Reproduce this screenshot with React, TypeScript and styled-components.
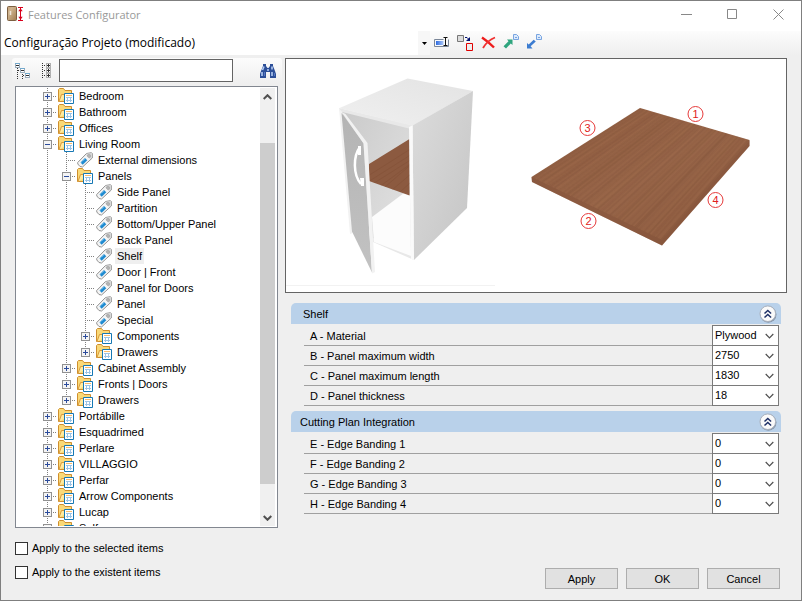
import React, { useState } from "react";
import styled, { createGlobalStyle } from "styled-components";

const GlobalStyle = createGlobalStyle`
  *, *::before, *::after { box-sizing: border-box; }
  body { margin: 0; background: #efefef; }
  button, input, select { font: inherit; color: inherit; }
`;

const UI_FONT = `"Liberation Sans", Arial, sans-serif`;
const TITLE_FONT = `"Open Sans", "Noto Sans", sans-serif`;

const Window = styled.div`
  display: flex;
  flex-direction: column;
  height: 100vh;
  border: 1px solid #7f7f7f;
  background: #efefef;
  color: #000;
  font: 11px/16px ${UI_FONT};
`;

const TitleBar = styled.header`
  display: flex;
  align-items: flex-start;
  height: 30px;
  padding-left: 6px;
  background: #fff;
`;

const TitleIcon = styled.span`
  display: grid;
  padding-top: 5px;
`;

const Title = styled.h1`
  flex: 1;
  margin: 6px 0 0 4px;
  color: #999;
  font: 400 11px/16px ${TITLE_FONT};
`;

const CaptionButton = styled.button`
  display: grid;
  place-items: center;
  width: 46px;
  height: 27px;
  padding: 0;
  border: 0;
  background: none;
`;

const Toolbar = styled.div`
  display: flex;
  align-items: stretch;
  height: 24px;
  background: linear-gradient(#fcfcfc, #efefef);
`;

const ProfilePicker = styled.div`
  display: grid;
  width: 429px;
  grid-template-columns: 1fr 12px;
  background: #fff;
`;

const ProfileSelect = styled.select`
  grid-area: 1 / 1 / 2 / 3;
  appearance: none;
  width: 100%;
  padding: 0 12px 0 3px;
  border: 0;
  background: transparent;
  font: 12px/16px ${TITLE_FONT};
`;

const ProfileArrow = styled.span`
  grid-area: 1 / 2;
  display: grid;
  place-items: center;
  background: #f7f7f7;
  pointer-events: none;
`;

const ToolButtons = styled.div`
  display: flex;
  align-items: center;
  gap: 7px;
  padding: 0 0 2px 3px;
`;

const IconButton = styled.button`
  display: grid;
  place-items: center;
  padding: 0;
  border: 0;
  background: none;
`;

const Content = styled.main`
  flex: 1;
  display: grid;
  grid-template-columns: 270px minmax(0, 1fr);
  gap: 3px;
  min-height: 0;
  padding: 3px 14px 0 11px;
`;

const Sidebar = styled.section`
  display: flex;
  flex-direction: column;
  min-height: 0;
`;

const SearchBar = styled.div`
  display: flex;
  align-items: center;
  height: 25px;
  padding: 0 6px 0 3px;
  border-radius: 3px;
  background: linear-gradient(#fcfcfc, #efefef);
`;

const TreeTools = styled.div`
  display: flex;
  gap: 11px;
`;

const SearchInput = styled.input`
  width: 174px;
  height: 23px;
  margin: 0 auto 0 7px;
  padding: 0 4px;
  border: 1px solid #646464;
  background: #fff;
`;

const TreeFrame = styled.div`
  display: flex;
  flex: 1;
  min-height: 0;
  margin: 3px 4px 0 3px;
  padding: 1px;
  border: 1px solid #828790;
  background: #fff;
`;

const TreeList = styled.div`
  flex: 1;
  padding-left: 21px;
  overflow: hidden;
`;

const TreeRow = styled.div`
  display: flex;
  align-items: center;
  height: 16px;
  white-space: nowrap;
`;

const Guide = styled.span<{ $half?: boolean; $branch?: boolean }>`
  position: relative;
  flex: none;
  display: grid;
  place-items: center;
  width: 19px;
  height: 16px;
  &::before {
    content: "";
    position: absolute;
    left: 9px;
    top: 0;
    width: 1px;
    height: ${(p) => (p.$half ? "8px" : "16px")};
    background: repeating-linear-gradient(#808080 0 1px, transparent 1px 2px);
  }
  &::after {
    content: "";
    display: ${(p) => (p.$branch ? "block" : "none")};
    position: absolute;
    left: 9px;
    right: 0;
    top: 8px;
    height: 1px;
    background: repeating-linear-gradient(90deg, #808080 0 1px, transparent 1px 2px);
  }
`;

const Spacer = styled.span`
  flex: none;
  width: 19px;
`;

const Expander = styled.button`
  position: relative;
  z-index: 1;
  display: block;
  width: 9px;
  height: 9px;
  padding: 0;
  border: 0;
  line-height: 0;
`;

const NodeIcon = styled.span`
  flex: none;
  display: grid;
  width: 16px;
  height: 16px;
  margin: 0 3px 0 1px;
`;

const NodeLabel = styled.span<{ $selected?: boolean }>`
  padding: 0 2px;
  background: ${(p) => (p.$selected ? "#efefef" : "transparent")};
`;

const ScrollTrack = styled.div`
  display: grid;
  grid-template-rows: 17px 38fr 341fr 25fr 17px;
  width: 15px;
  margin-right: 1px;
  background: #f0f0f0;
`;

const ScrollArrow = styled.button<{ $row: number }>`
  grid-row: ${(p) => p.$row};
  display: grid;
  place-items: center;
  padding: 0;
  border: 0;
  background: none;
`;

const ScrollThumb = styled.div`
  grid-row: 3;
  background: #cdcdcd;
`;

const Details = styled.section`
  display: flex;
  flex-direction: column;
  min-width: 0;
`;

const Preview = styled.figure`
  height: 235px;
  margin: 0;
  border: 1px solid #646464;
  background: #fff;
  svg { display: block; width: 100%; height: 100%; }
`;

const Group = styled.section`
  margin: 10px 6px 0;
  & + & { margin-top: 5px; }
`;

const GroupHeader = styled.header`
  display: flex;
  align-items: center;
  justify-content: space-between;
  height: 21px;
  padding-right: 4px;
  border-radius: 5px 5px 0 0;
  background: #b9d1ea;
`;

const GroupTitle = styled.h2<{ $indent: number }>`
  margin: 0;
  padding-left: ${(p) => p.$indent}px;
  font: inherit;
`;

const GroupBody = styled.div`
  margin: 2px 2px 0 13px;
`;

const Field = styled.div`
  display: grid;
  grid-template-columns: minmax(0, 1fr) 67px;
  height: 20px;
`;

const FieldLabel = styled.label`
  padding: 2px 0 0 6px;
  border-bottom: 1px solid #a0a0a0;
`;

const SelectBox = styled.div`
  display: grid;
  align-items: center;
  justify-items: end;
  border: 1px solid #7a7a7a;
  border-top-width: 0;
  background: #fff;
  ${Field}:first-child & { box-shadow: 0 -1px #7a7a7a; }
  svg { grid-area: 1 / 1; margin-right: 4px; pointer-events: none; }
`;

const FieldSelect = styled.select`
  grid-area: 1 / 1;
  appearance: none;
  width: 100%;
  height: 19px;
  padding: 0 16px 2px 2px;
  border: 0;
  background: transparent;
`;

const Footer = styled.footer`
  display: flex;
  justify-content: space-between;
  align-items: flex-end;
  padding: 12px 21px 11px 14px;
`;

const Checks = styled.div`
  display: grid;
  gap: 8px;
  padding-bottom: 9px;
`;

const CheckLabel = styled.label`
  display: flex;
  align-items: center;
  gap: 4px;
`;

const CheckBox = styled.input`
  appearance: none;
  width: 13px;
  height: 13px;
  margin: 0;
  border: 1px solid #333;
  background: #fff;
  &:checked { box-shadow: inset 0 0 0 2px #fff; background: #333; }
`;

const Actions = styled.div`
  display: flex;
  gap: 8px;
`;

const ActionButton = styled.button`
  width: 73px;
  height: 21px;
  padding: 0;
  border: 1px solid #adadad;
  background: #e1e1e1;
`;

/* ---------- icons ---------- */

const AppIcon = () => (
  <svg width="17" height="16" viewBox="0 0 17 16">
    <defs>
      <linearGradient id="door" x1="0" y1="0" x2="1" y2="1">
        <stop offset="0" stopColor="#c4a17a" />
        <stop offset=".3" stopColor="#d0b590" />
        <stop offset="1" stopColor="#a07c50" />
      </linearGradient>
    </defs>
    <rect x=".5" y=".5" width="9" height="14" rx="1" fill="url(#door)" stroke="#7c5f40" />
    <path d="M3.500 5v4" stroke="#eee6da" strokeWidth="1.500" />
    <path d="M11 1.500h5M11 14.500h5M13.500 2v12" stroke="#d8001c" />
    <path d="M11.300 5.200l2.200-3 2.200 3zM11.300 10.800l2.200 3 2.200-3z" fill="#d8001c" />
  </svg>
);

const MinimizeIcon = () => (
  <svg width="11" height="11"><path d="M0 5.500h11" stroke="#888" /></svg>
);
const MaximizeIcon = () => (
  <svg width="11" height="11"><path d="M.500.500h9v9h-9z" fill="none" stroke="#888" /></svg>
);
const CloseIcon = () => (
  <svg width="11" height="11"><path d="M.500.500l10 10M10.500.500l-10 10" stroke="#888" /></svg>
);
const DropArrow = () => (
  <svg width="5" height="3"><path d="M0 0h5L2.500 3z" /></svg>
);

const RenameIcon = () => (
  <svg width="17" height="16" viewBox="0 0 17 16">
    <defs>
      <linearGradient id="ren"><stop offset="0" stopColor="#2c6ae0" /><stop offset="1" stopColor="#b4cdf8" /></linearGradient>
    </defs>
    <path d="M11 5.500H1.500v7H15.500v-7" fill="#f6f8fc" stroke="#7a8698" />
    <rect x="3" y="7" width="8" height="4" fill="url(#ren)" />
    <path d="M10.500 3v9h4V3z" fill="#f8f8f8" />
    <path d="M10.500 3.500h4M12.500 4v8M10.500 11.500h4" fill="none" stroke="#111" />
  </svg>
);
const CopyIcon = () => (
  <svg width="17" height="17" viewBox="0 0 17 17">
    <path d="M.500 1.500h6v6h-6z" fill="#dcdcdc" stroke="#777" />
    <path d="M9.500 9.500h6v7h-6z" fill="#eee" stroke="#e00000" />
    <path d="M8 3.500h2l2 2" fill="none" stroke="#001070" />
    <path d="M13 3v4H9z" fill="#001070" />
  </svg>
);
const DeleteIcon = () => (
  <svg width="15" height="15" viewBox="0 0 15 15">
    <path d="M1 2.500c3 2 8 6 12 10" stroke="#ee1c1c" strokeWidth="2.400" fill="none" />
    <path d="M14 2.500C10 4 5 8 2 13" stroke="#f03030" strokeWidth="1.800" fill="none" />
  </svg>
);
const PageGlyph = () => (
  <>
    <path d="M10.500.500h3l2 2v3h-5z" fill="#dceafc" stroke="#78a4e0" />
    <path d="M12 3.500h2" stroke="#78a4e0" />
  </>
);
const ExportIcon = () => (
  <svg width="16" height="16" viewBox="0 0 16 16">
    <PageGlyph />
    <path d="M4 5.500h5.500V11L7.800 9.500l-4.800 5L.500 12.300l5-5z" fill="#2fa57e" />
  </svg>
);
const ImportIcon = () => (
  <svg width="16" height="16" viewBox="0 0 16 16">
    <PageGlyph />
    <path d="M1 9l1.700 1.500 5-4.700L9.800 7.600l-5.200 4.700L6.500 14.500H1z" fill="#3c7cd0" />
  </svg>
);

const CollapseIcon = () => (
  <svg width="16" height="16" viewBox="0 0 16 16" shapeRendering="crispEdges">
    <path d="M2.500 5v11M3 7.500h2M7.500 11v5M8 12.500h2" stroke="#333" strokeDasharray="1 1" />
    <g fill="#fff" stroke="#9aacbc">
      <path d="M.500.500h4v4h-4zM5.500 5.500h4v4h-4zM10.500 10.500h4v4h-4z" />
    </g>
    <path d="M0 .500h5M5 5.500h5M10 10.500h5" stroke="#72a8cc" />
    <path d="M1 2.500h3M6 7.500h3M11 12.500h3" stroke="#333" />
  </svg>
);
const ExpandIcon = () => (
  <svg width="10" height="16" viewBox="0 0 10 16" shapeRendering="crispEdges">
    <path d="M.500 0v16M2 2.500h2M2 7.500h2M2 12.500h2" stroke="#333" strokeDasharray="1 1" />
    <g fill="#fff" stroke="#b0b0b0">
      <path d="M4.500.500h4v4h-4zM4.500 5.500h4v4h-4zM4.500 10.500h4v4h-4z" />
    </g>
    <path d="M5 2.500h3M5 7.500h3M5 12.500h3M6.500 1v3M6.500 6v3M6.500 11v3" stroke="#333" />
  </svg>
);
const BinocularsIcon = () => (
  <svg width="16" height="14" viewBox="0 0 16 14">
    <path d="M3 0h3v2l1.500 2h1L10 2V0h3v2l2 5 1 3v4h-6V8H6v6H0v-4l1-3 2-5z" fill="#2c4f98" />
    <path d="M4 2.500L2.500 6M12 2.500v3M2 8v4M12 8v4" fill="none" stroke="#b4cbf2" strokeWidth="1.600" />
    <path d="M4.500 8v4M14.500 9v3" stroke="#5778c0" />
    <path d="M7 5h2v2H7z" fill="#90acdf" />
  </svg>
);

const FolderIcon = () => (
  <svg width="16" height="16" viewBox="0 0 16 16">
    <path d="M.500 13.500V1.500l1-1h4l1.500 2h6.500v11z" fill="#f9d978" stroke="#cf8f2e" />
    <path d="M1 13.500l2.500-7H14" fill="#ffeaa0" stroke="#d99a3c" />
    <path d="M6.500 5.500h9v10h-9z" fill="#fff" stroke="#1678b4" />
    <path d="M8 7.500h6" stroke="#f8bc6c" />
    <path d="M8 9.500h6M8 12.500h6M9.500 9v5M12.500 9v5" stroke="#9cc4e6" />
  </svg>
);
const TagIcon = () => (
  <svg width="16" height="16" viewBox="0 0 16 16">
    <path d="M.700 10.500L9.500 1.500l5-.800.800.800v4.500L5.500 15 3 14.500.800 12z" fill="#f4f4f4" stroke="#929292" />
    <path d="M10.500 1.500h4v4l-1.500 1.500-4-4z" fill="#cfcfcf" />
    <circle cx="12" cy="4" r="1.200" fill="#fff" stroke="#777" strokeWidth=".8" />
    <path d="M3.500 10.500L8 6l2.300 2.300-4.600 4.500z" fill="#1e8ad0" />
    <path d="M4.500 10.500l3.500-3.500" stroke="#72c0f0" strokeDasharray="1 1" />
  </svg>
);
const ToggleGlyph = ({ open }: { open: boolean }) => (
  <svg width="9" height="9" viewBox="0 0 9 9" shapeRendering="crispEdges">
    <rect x=".5" y=".5" width="8" height="8" fill="#f4f4f4" stroke="#919191" />
    <path d={open ? "M2 4.500h5" : "M2 4.500h5M4.500 2v5"} stroke="#2b4b9b" />
  </svg>
);
const Chevron = ({ up, bold }: { up?: boolean; bold?: boolean }) => (
  <svg width="9" height="6" viewBox="0 0 9 6">
    <path d={up ? "M.7 5L4.500 1.200 8.300 5" : "M.7 1L4.500 4.800 8.300 1"} fill="none" stroke="#505050" strokeWidth={bold ? 2 : 1.2} />
  </svg>
);
const CollapseCircle = () => (
  <svg width="18" height="18" viewBox="0 0 18 18">
    <circle cx="9.300" cy="9.500" r="8.200" fill="#8796aa" />
    <circle cx="8.800" cy="8.700" r="7.800" fill="#fafafa" stroke="#a8b0bc" />
    <path d="M5.500 8.500l3.300-3 3.300 3M5.500 12.500l3.300-3 3.300 3" fill="none" stroke="#1d2f66" strokeWidth="1.500" />
  </svg>
);

/* ---------- preview drawing ---------- */

const GRAIN = Array.from({ length: 84 }, (_, i) => {
  const t = (i + 0.5) / 84;
  return {
    x1: 532 + 130 * t, y1: 177 + 63 * t,
    x2: 640 + 109 * t, y2: 108 + 32 * t,
    tone: (i * 37) % 11 < 5 ? "#6f432a" : "#ab7350",
    opacity: 0.03 + ((i * 53) % 17) / 140,
  };
});
const MARKS = [
  { n: 1, x: 695, y: 114 },
  { n: 2, x: 588, y: 221 },
  { n: 3, x: 587, y: 128 },
  { n: 4, x: 715, y: 200 },
];

const ShelfDrawing = () => (
  <svg viewBox="286 59 500 233" role="img" aria-label="Cabinet and shelf">
    <defs>
      <linearGradient id="side" x1="0" y1="0" x2="1" y2="1"><stop offset="0" stopColor="#dcdcdc" /><stop offset="1" stopColor="#c4c4c4" /></linearGradient>
      <linearGradient id="top" x1="0" y1="1" x2="1" y2="0"><stop offset="0" stopColor="#f0f0f0" /><stop offset="1" stopColor="#e3e3e3" /></linearGradient>
      <linearGradient id="inner" x1="0" y1="0" x2="1" y2="1"><stop offset="0" stopColor="#cacaca" /><stop offset="1" stopColor="#e4e4e4" /></linearGradient>
      <linearGradient id="leaf" x1="0" y1="0" x2="0" y2="1"><stop offset="0" stopColor="#b4b4b4" /><stop offset="1" stopColor="#c2c2c2" /></linearGradient>
      <linearGradient id="wood" x1="0" y1="0" x2="1" y2="1"><stop offset="0" stopColor="#8e5c40" /><stop offset=".5" stopColor="#966448" /><stop offset="1" stopColor="#8b593e" /></linearGradient>
      <clipPath id="shelfClip"><path d="M369 164L409.500 139v56.500L369 181z" /></clipPath>
    </defs>
    <path d="M286 285.500h209" stroke="#f2f2f2" />
    <path d="M339 108l73 17 2 135-41-18z" fill="#e8e8e8" />
    <path d="M342 112l67 16.500 2 126-39-17z" fill="url(#inner)" />
    <path d="M372 217l32-24 6 2 1 61-37-14z" fill="#fcfcfc" />
    <path d="M369 164L409.500 139v56.500L369 181z" fill="#8c5a40" />
    <g clipPath="url(#shelfClip)" stroke="#7a4a30" strokeOpacity=".3">
      <path d="M360 181l60-38M360 187l60-38M360 192l60-38M364 198l60-44M370 200l60-52M380 200l50-42M390 201l40-36" />
    </g>
    <path d="M407.500 78.500L473 91l-60.500 34.800L339 108.300z" fill="url(#top)" />
    <path d="M473 91l-6 117-53 52-1.500-134.500z" fill="url(#side)" />
    <path d="M409 127l3.500-1.500 1.500 134.500-3-1z" fill="#fafafa" />
    <path d="M339 108l3 4 11 121-3 1z" fill="#f2f2f2" />
    <path d="M341.500 113l22 30 8.500 129.500-20-41z" fill="url(#leaf)" />
    <path d="M341.500 112l4 2 22 29 7.500 129-3 1.500-8.500-130z" fill="#f2f2f2" />
    <path d="M360 147c-7 9-7 28 1 37" fill="none" stroke="#fff" strokeWidth="2.500" />
    <path d="M358 146h3v9h-3zM360 178h4v8h-3z" fill="#fff" />
    <path d="M531.500 177L640 108l109.500 32v6L662 245.500 532 182z" fill="url(#wood)" />
    {GRAIN.map((g, i) => (
      <line key={i} x1={g.x1} y1={g.y1} x2={g.x2} y2={g.y2} stroke={g.tone} strokeOpacity={g.opacity} strokeWidth="2" />
    ))}
    <path d="M531.500 177L662 240v5.500L532 182z" fill="#7c4b33" fillOpacity=".35" />
    <path d="M662 240l87.500-99.500v5.500L662 245.500z" fill="#7c4b33" fillOpacity=".35" />
    {MARKS.map((m) => (
      <g key={m.n} fontFamily="Liberation Sans">
        <circle cx={m.x + 0.5} cy={m.y} r="7.500" fill="#fff" stroke="#e63a3a" />
        <text x={m.x + 0.5} y={m.y + 4} textAnchor="middle" fontSize="11" fill="#e02020">{m.n}</text>
      </g>
    ))}
  </svg>
);

/* ---------- data ---------- */

type TreeNode = { name: string; leaf?: boolean; children?: TreeNode[] };

const leaf = (name: string): TreeNode => ({ name, leaf: true });

const TREE: TreeNode[] = [
  { name: "Bedroom" },
  { name: "Bathroom" },
  { name: "Offices" },
  {
    name: "Living Room",
    children: [
      leaf("External dimensions"),
      {
        name: "Panels",
        children: [
          leaf("Side Panel"), leaf("Partition"), leaf("Bottom/Upper Panel"), leaf("Back Panel"),
          leaf("Shelf"), leaf("Door | Front"), leaf("Panel for Doors"), leaf("Panel"), leaf("Special"),
          { name: "Components" },
          { name: "Drawers" },
        ],
      },
      { name: "Cabinet Assembly" },
      { name: "Fronts | Doors" },
      { name: "Drawers" },
    ],
  },
  { name: "Portábille" },
  { name: "Esquadrimed" },
  { name: "Perlare" },
  { name: "VILLAGGIO" },
  { name: "Perfar" },
  { name: "Arrow Components" },
  { name: "Lucap" },
  { name: "Self" },
];

const GROUPS = [
  {
    title: "Shelf",
    indent: 12,
    fields: [
      ["A - Material", "Plywood"],
      ["B - Panel maximum width", "2750"],
      ["C - Panel maximum length", "1830"],
      ["D - Panel thickness", "18"],
    ],
  },
  {
    title: "Cutting Plan Integration",
    indent: 9,
    fields: [
      ["E - Edge Banding 1", "0"],
      ["F - Edge Banding 2", "0"],
      ["G - Edge Banding 3", "0"],
      ["H - Edge Banding 4", "0"],
    ],
  },
];

type BranchProps = {
  nodes: TreeNode[];
  trail?: boolean[];
  selected: string;
  onSelect: (name: string) => void;
};

function Branch({ nodes, trail = [], selected, onSelect }: BranchProps) {
  return (
    <>
      {nodes.map((node, i) => {
        const last = i === nodes.length - 1;
        const open = Boolean(node.children);
        return (
          <React.Fragment key={node.name}>
            <TreeRow
              role="treeitem"
              aria-level={trail.length + 1}
              aria-selected={node.name === selected}
              onClick={() => onSelect(node.name)}
            >
              {trail.map((more, d) => (more ? <Guide key={d} /> : <Spacer key={d} />))}
              <Guide $branch $half={last}>
                {!node.leaf && (
                  <Expander aria-label={`${open ? "Collapse" : "Expand"} ${node.name}`}>
                    <ToggleGlyph open={open} />
                  </Expander>
                )}
              </Guide>
              <NodeIcon>{node.leaf ? <TagIcon /> : <FolderIcon />}</NodeIcon>
              <NodeLabel $selected={node.name === selected}>{node.name}</NodeLabel>
            </TreeRow>
            {node.children && (
              <Branch nodes={node.children} trail={[...trail, !last]} selected={selected} onSelect={onSelect} />
            )}
          </React.Fragment>
        );
      })}
    </>
  );
}

export default function App() {
  const [selected, setSelected] = useState("Shelf");
  return (
    <>
      <GlobalStyle />
      <Window>
        <TitleBar>
          <TitleIcon><AppIcon /></TitleIcon>
          <Title>Features Configurator</Title>
          <CaptionButton aria-label="Minimize"><MinimizeIcon /></CaptionButton>
          <CaptionButton aria-label="Maximize"><MaximizeIcon /></CaptionButton>
          <CaptionButton aria-label="Close"><CloseIcon /></CaptionButton>
        </TitleBar>
        <Toolbar>
          <ProfilePicker>
            <ProfileSelect aria-label="Configuration">
              <option>Configuração Projeto (modificado)</option>
            </ProfileSelect>
            <ProfileArrow><DropArrow /></ProfileArrow>
          </ProfilePicker>
          <ToolButtons>
            <IconButton aria-label="Rename"><RenameIcon /></IconButton>
            <IconButton aria-label="Copy"><CopyIcon /></IconButton>
            <IconButton aria-label="Delete"><DeleteIcon /></IconButton>
            <IconButton aria-label="Export"><ExportIcon /></IconButton>
            <IconButton aria-label="Import"><ImportIcon /></IconButton>
          </ToolButtons>
        </Toolbar>
        <Content>
          <Sidebar>
            <SearchBar>
              <TreeTools>
                <IconButton aria-label="Collapse all"><CollapseIcon /></IconButton>
                <IconButton aria-label="Expand all"><ExpandIcon /></IconButton>
              </TreeTools>
              <SearchInput type="text" aria-label="Search" />
              <IconButton aria-label="Find"><BinocularsIcon /></IconButton>
            </SearchBar>
            <TreeFrame>
              <TreeList role="tree">
                <Branch nodes={TREE} selected={selected} onSelect={setSelected} />
              </TreeList>
              <ScrollTrack>
                <ScrollArrow $row={1} aria-label="Scroll up"><Chevron up bold /></ScrollArrow>
                <ScrollThumb />
                <ScrollArrow $row={5} aria-label="Scroll down"><Chevron bold /></ScrollArrow>
              </ScrollTrack>
            </TreeFrame>
          </Sidebar>
          <Details>
            <Preview><ShelfDrawing /></Preview>
            {GROUPS.map((group) => (
              <Group key={group.title}>
                <GroupHeader>
                  <GroupTitle $indent={group.indent}>{group.title}</GroupTitle>
                  <IconButton aria-label={`Collapse ${group.title}`}><CollapseCircle /></IconButton>
                </GroupHeader>
                <GroupBody>
                  {group.fields.map(([label, value]) => (
                    <Field key={label}>
                      <FieldLabel htmlFor={label[0]}>{label}</FieldLabel>
                      <SelectBox>
                        <FieldSelect id={label[0]}><option>{value}</option></FieldSelect>
                        <Chevron />
                      </SelectBox>
                    </Field>
                  ))}
                </GroupBody>
              </Group>
            ))}
          </Details>
        </Content>
        <Footer>
          <Checks>
            <CheckLabel><CheckBox type="checkbox" />Apply to the selected items</CheckLabel>
            <CheckLabel><CheckBox type="checkbox" />Apply to the existent items</CheckLabel>
          </Checks>
          <Actions>
            <ActionButton>Apply</ActionButton>
            <ActionButton>OK</ActionButton>
            <ActionButton>Cancel</ActionButton>
          </Actions>
        </Footer>
      </Window>
    </>
  );
}
